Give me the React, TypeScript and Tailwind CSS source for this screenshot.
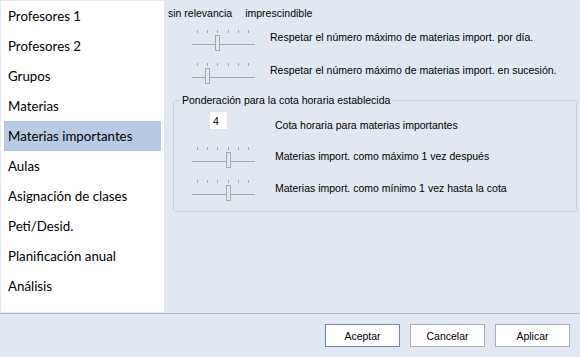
import React from "react";

const navItems = [
  "Profesores 1",
  "Profesores 2",
  "Grupos",
  "Materias",
  "Materias importantes",
  "Aulas",
  "Asignación de clases",
  "Peti/Desid.",
  "Planificación anual",
  "Análisis",
];

function Slider({ t }: { t: number }) {
  const ticks = [7, 17, 27, 38, 48, 58];
  return (
    <svg width="68" height="22" className="block shrink-0">
      {ticks.map((x) => (
        <rect key={x} x={x} y={0} width={1} height={3} fill="#A7A7A7" />
      ))}
      <rect x={2} y={14} width={63} height={1} fill="#A7A7A7" />
      <rect x={t + 0.5} y={5.5} width={4} height={15} fill="#E1E8F1" stroke="#A7A7A7" strokeWidth={1} />
    </svg>
  );
}

const txt = "text-[10.5px] leading-[12px] text-black whitespace-nowrap";
const font = { fontFamily: '"Liberation Sans", Arial, sans-serif' };
const navFont = { fontFamily: 'Lato, "Noto Sans", sans-serif' };

export default function App() {
  return (
    <div className="w-[580px] h-[357px] bg-[#E1E8F1] flex flex-col overflow-hidden" style={font}>
      <div className="flex h-[313px]">
        <div className="ml-px mt-px w-[163px] h-[311px] bg-white flex flex-col">
          {navItems.map((item, i) =>
            i === 4 ? (
              <div
                key={item}
                className="h-[30px] mx-[3px] pl-[4px] pt-[2px] bg-[#B7CAE6] flex items-center text-[13.3px] text-black whitespace-nowrap"
                style={navFont}
              >
                {item}
              </div>
            ) : (
              <div
                key={item}
                className="h-[30px] pl-[7px] pt-[2px] flex items-center text-[13.3px] text-black whitespace-nowrap"
                style={navFont}
              >
                {item}
              </div>
            )
          )}
        </div>
        <div className="flex-1 flex flex-col">
          <div className={`${txt} mt-[7px] ml-[4px] flex gap-[13px]`}>
            <span>sin relevancia</span>
            <span>imprescindible</span>
          </div>
          <div className="flex items-start mt-[11px] ml-[26px]">
            <Slider t={25} />
            <span className={`${txt} ml-[12px] mt-[1px]`}>Respetar el número máximo de materias import. por día.</span>
          </div>
          <div className="flex items-start mt-[11px] ml-[26px]">
            <Slider t={15} />
            <span className={`${txt} ml-[12px] mt-[1px]`}>Respetar el número máximo de materias import. en sucesión.</span>
          </div>
          <fieldset className="mt-[9px] ml-[9px] mr-[3px] border border-[#CBD2DC] rounded-[3px] pl-[6px] pb-[9px]">
            <legend className={`${txt} px-[2px]`}>Ponderación para la cota horaria establecida</legend>
            <div className="flex items-start mt-[5px] ml-[29px]">
              <div className={`w-[19px] h-[19px] bg-white border border-[#E2E2E2] ${txt} pl-[3px] flex items-center`}>4</div>
              <span className={`${txt} ml-[47px] mt-[8px]`}>Cota horaria para materias importantes</span>
            </div>
            <div className="flex items-start mt-[16px] ml-[10px]">
              <Slider t={36} />
              <span className={`${txt} ml-[17px] mt-[3px]`}>Materias import. como máximo 1 vez después</span>
            </div>
            <div className="flex items-start mt-[11px] ml-[10px]">
              <Slider t={36} />
              <span className={`${txt} ml-[17px] mt-[2px]`}>Materias import. como mínimo 1 vez hasta la cota</span>
            </div>
          </fieldset>
        </div>
      </div>
      <div className="h-px bg-[#AAB9D2]" />
      <div className="flex justify-end gap-[10px] pt-[10px] pr-[10px]">
        <button className={`w-[75px] h-[23px] bg-white border border-[#6F84A6] ${txt}`}>Aceptar</button>
        <button className={`w-[75px] h-[23px] bg-white border border-[#ADADAD] ${txt}`}>Cancelar</button>
        <button className={`w-[75px] h-[23px] bg-white border border-[#ADADAD] ${txt}`}>Aplicar</button>
      </div>
    </div>
  );
}
